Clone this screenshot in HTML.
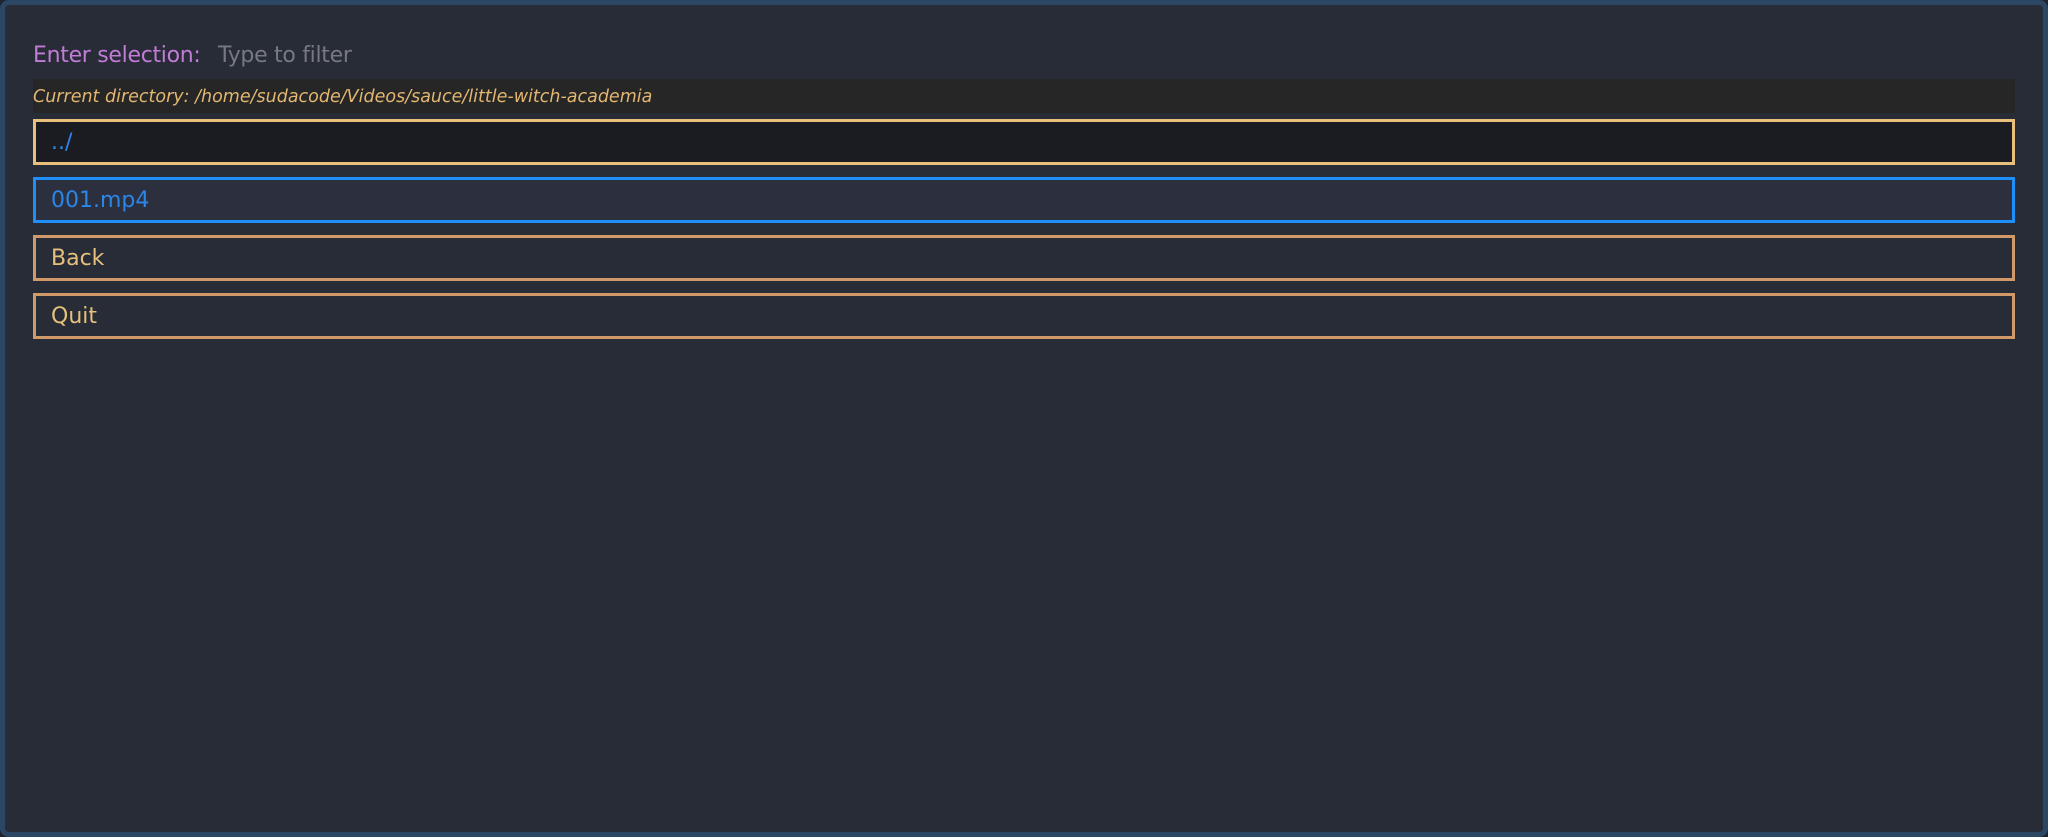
<!DOCTYPE html>
<html><head><meta charset="utf-8"><style>
html,body{margin:0;padding:0;background:#1d2430;}
body{width:2048px;height:837px;overflow:hidden;font-family:"DejaVu Sans","Liberation Sans",sans-serif;}
.win{position:absolute;left:0;top:0;width:2038px;height:827px;border:5px solid #2c4763;border-radius:9px;background:#272c36;}
.h{position:absolute;left:28px;top:38px;font-size:22px;color:#c27bd6;white-space:nowrap;letter-spacing:-0.3px;}
.h span{color:#767982;position:absolute;left:185px;}
.dir{position:absolute;left:28px;top:74px;width:1982px;height:34px;background:#262626;color:#e3b671;font-style:italic;font-size:17.5px;line-height:36px;white-space:nowrap;}
.row{position:absolute;left:28px;width:1961px;height:40px;border:3px solid;font-size:22px;line-height:42px;padding-left:15px;white-space:nowrap;}
</style></head><body>
<div class="win">
<div class="h">Enter selection:<span>Type to filter</span></div>
<div class="dir">Current directory: /home/sudacode/Videos/sauce/little-witch-academia</div>
<div class="row" style="top:114px;border-color:#e8c07c;background:#1b1c21;color:#2a86e8;">../</div>
<div class="row" style="top:172px;border-color:#1e8ff8;background:#2c303e;color:#2a86e8;">001.mp4</div>
<div class="row" style="top:230px;border-color:#d0996a;background:#272c36;color:#e6c07c;">Back</div>
<div class="row" style="top:288px;border-color:#d0996a;background:#272c36;color:#e6c07c;">Quit</div>
</div>
</body></html>
